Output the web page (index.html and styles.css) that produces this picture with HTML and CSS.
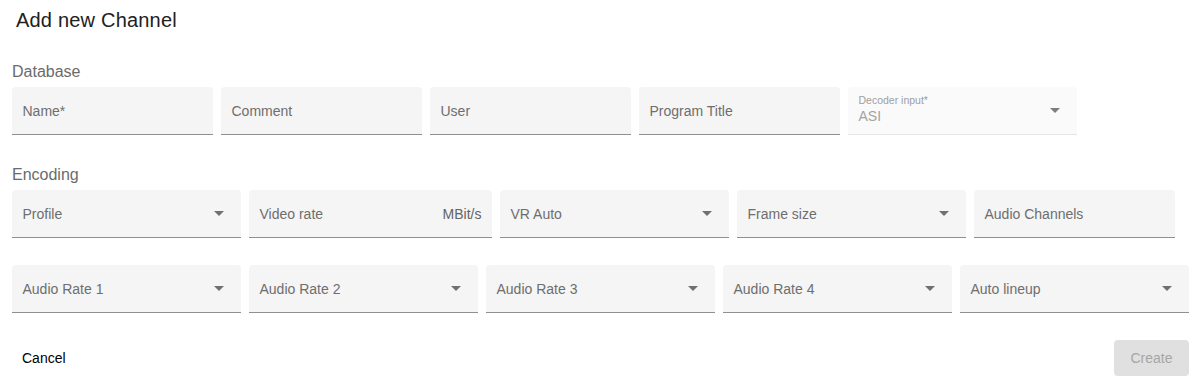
FILE: index.html
```html
<!DOCTYPE html>
<html>
<head>
<meta name="viewport" content="width=device-width, initial-scale=1">
<title>Add new Channel</title>
<link rel="stylesheet" href="styles.css">
</head>
<body>

<div class="dialog">
  <h2 class="dialog-title">Add new Channel</h2>

  <form class="channel-form" onsubmit="event.preventDefault()">
    <!-- Database -->
    <div class="section-label">Database</div>
    <div class="field-row">
      <div class="field"><span class="field-label">Name*</span></div>
      <div class="field"><span class="field-label">Comment</span></div>
      <div class="field"><span class="field-label">User</span></div>
      <div class="field"><span class="field-label">Program Title</span></div>
      <div class="field field-select disabled">
        <div class="field-stack">
          <span class="float-label">Decoder input*</span>
          <span class="field-value">ASI</span>
        </div>
        <span class="arrow"></span>
      </div>
    </div>

    <!-- Encoding -->
    <div class="section-label">Encoding</div>
    <div class="field-row">
      <div class="field field-select"><span class="field-label">Profile</span><span class="arrow"></span></div>
      <div class="field field-suffix"><span class="field-label">Video rate</span><span class="suffix">MBit/s</span></div>
      <div class="field field-select"><span class="field-label">VR Auto</span><span class="arrow"></span></div>
      <div class="field field-select"><span class="field-label">Frame size</span><span class="arrow"></span></div>
      <div class="field"><span class="field-label">Audio Channels</span></div>
    </div>

    <div class="field-row">
      <div class="field field-select"><span class="field-label">Audio Rate 1</span><span class="arrow"></span></div>
      <div class="field field-select"><span class="field-label">Audio Rate 2</span><span class="arrow"></span></div>
      <div class="field field-select"><span class="field-label">Audio Rate 3</span><span class="arrow"></span></div>
      <div class="field field-select"><span class="field-label">Audio Rate 4</span><span class="arrow"></span></div>
      <div class="field field-select"><span class="field-label">Auto lineup</span><span class="arrow"></span></div>
    </div>
  </form>

  <div class="dialog-actions">
    <button type="button" class="btn btn-cancel">Cancel</button>
    <button type="button" class="btn btn-create" disabled>Create</button>
  </div>
</div>

</body>
</html>
```

FILE: styles.css
```css
* {box-sizing: border-box;}

body {
  margin: 0;
  font-family: "Liberation Sans", Arial, Helvetica, sans-serif;
  background: white;
  color: rgba(0, 0, 0, 0.87);
}

.dialog {
  padding: 4px 8px 0 12px;
}

.dialog-title {
  margin: 0 0 0 4px;
  font-size: 20px;
  font-weight: normal;
  line-height: 32px;
  letter-spacing: 0.2px;
  color: #212121;
}

/* Section headings - Database, Encoding */
.section-label {
  margin: 26px 0 5px 0;
  font-size: 16px;
  line-height: 20px;
  color: #6b6b6b;
}

.field-row + .section-label {
  margin-top: 30px;
}

.field-row {
  display: flex;
  gap: 8px;
}

.field-row + .field-row {
  margin-top: 27px;
}

/* Filled form field with underline */
.field {
  display: flex;
  align-items: center;
  width: 201px;
  height: 48px;
  padding: 0 10.5px;
  background-color: #f5f5f5;
  border-radius: 4px 4px 0 0;
  border-bottom: 1px solid #8f8f8f;
  font-size: 14px;
  line-height: 16px;
}

.field-select {
  width: 229px;
}

.field-suffix {
  width: 243px;
}

.field-label {
  flex: 1;
  color: #6e6e6e;
  white-space: nowrap;
}

.suffix {
  color: #636363;
}

.arrow {
  width: 0;
  height: 0;
  margin-right: 7px;
  border-left: 5px solid transparent;
  border-right: 5px solid transparent;
  border-top: 5px solid rgba(0, 0, 0, 0.54);
}

/* Disabled select */
.field.disabled {
  align-items: stretch;
  background-color: #fafafa;
  border-bottom-color: #e6e6e6;
}

.field.disabled .arrow {
  align-self: center;
  border-top-color: rgba(0, 0, 0, 0.5);
}

.field-stack {
  flex: 1;
  display: flex;
  flex-direction: column;
  padding-top: 7px;
}

.float-label {
  font-size: 10.5px;
  line-height: 12px;
  margin-bottom: 2px;
  color: #a0a0a0;
}

.field-value {
  color: #a3a3a3;
}

/* Bottom buttons */
.dialog-actions {
  display: flex;
  justify-content: space-between;
  margin-top: 27px;
}

.btn {
  height: 36px;
  border: none;
  border-radius: 4px;
  font-family: inherit;
  font-size: 14px;
  line-height: 36px;
  background: transparent;
  cursor: pointer;
}

.btn-cancel {
  padding: 0 10px;
  color: #000;
}

.btn-create {
  width: 75px;
  padding: 0;
  background-color: #e0e0e0;
  color: #a6a6a6;
  cursor: default;
}
```
